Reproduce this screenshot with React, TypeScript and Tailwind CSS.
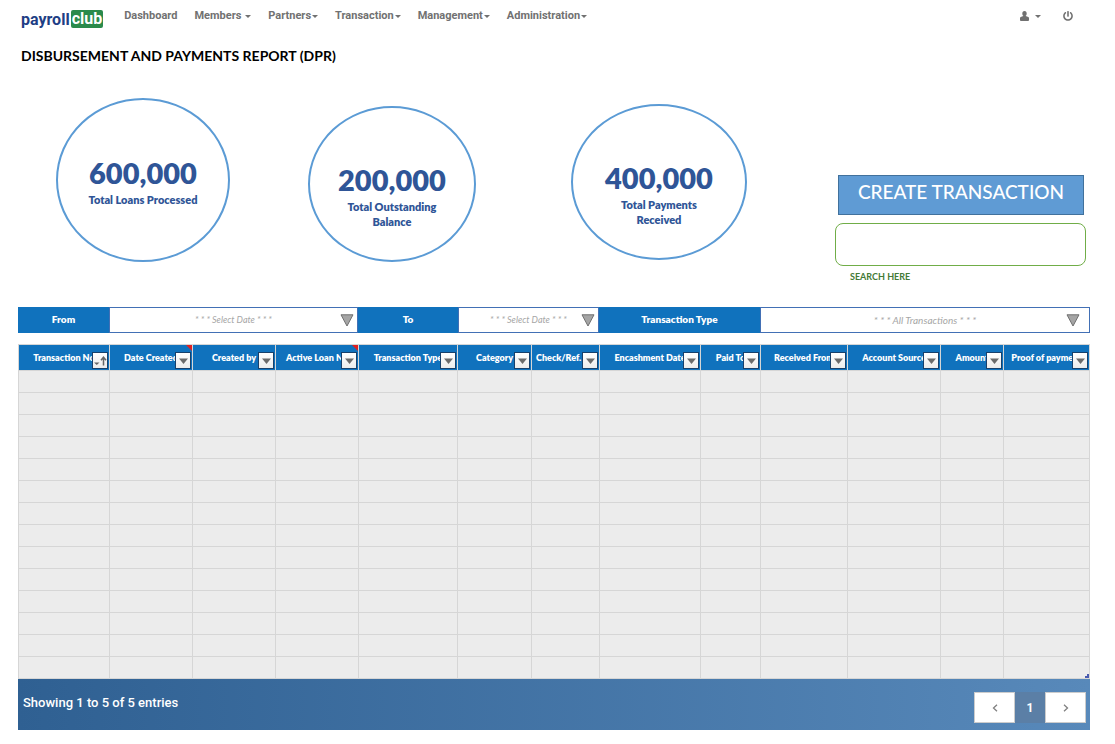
import React from "react";
import { FaPowerOff } from "react-icons/fa";
import { clsx } from "clsx";

const menus = [
  { label: "Dashboard", caret: false },
  { label: "Members", caret: true, spaced: true },
  { label: "Partners", caret: true },
  { label: "Transaction", caret: true },
  { label: "Management", caret: true },
  { label: "Administration", caret: true },
];

const stats = [
  { value: "600,000", label: "Total Loans Processed", shape: "h-[164px] w-[174px] pt-[57px]" },
  { value: "200,000", label: "Total Outstanding Balance", shape: "ml-[78px] mt-2 h-[156px] w-[168px] pt-14" },
  { value: "400,000", label: "Total Payments Received", shape: "ml-[95px] mt-1.5 h-[156px] w-[176px] pt-14" },
];

const columns = [
  { label: "Transaction No", width: "w-[91px]", sorted: true },
  { label: "Date Created", width: "w-[83px]", note: true },
  { label: "Created by", width: "w-[83px]" },
  { label: "Active Loan No", width: "w-[83px]", note: true },
  { label: "Transaction Type", width: "w-[99px]" },
  { label: "Category", width: "w-[74px]" },
  { label: "Check/Ref.", width: "w-[68px]", start: true },
  { label: "Encashment Date", width: "w-[101px]" },
  { label: "Paid To", width: "w-[60px]" },
  { label: "Received From", width: "w-[87px]" },
  { label: "Account Source", width: "w-[93px]" },
  { label: "Amount", width: "w-[63px]" },
  { label: "Proof of payment", width: "w-[86px]" },
];

const rows = Array.from({ length: 14 }, (_, i) => i);

function Caret() {
  return (
    <svg width="6" height="3" viewBox="0 0 6 3" fill="currentColor" aria-hidden="true">
      <path d="M0 0h6L3 3z" />
    </svg>
  );
}

function Logo() {
  return (
    <a href="#" className="flex items-center font-[Roboto,sans-serif] text-[16px] leading-[18px] font-bold">
      <span className="text-[#1f3f85]">payroll</span>
      <span className="mb-0.5 ml-px block rounded-[2px] bg-[#2a8a4b] px-px text-white">club</span>
    </a>
  );
}

function FilterLabel({ id, text }: { id: string; text: string }) {
  return (
    <label
      htmlFor={id}
      className="flex items-center justify-center bg-[#1072bd] pb-0.5 text-[10px] font-extrabold text-white"
    >
      {text}
    </label>
  );
}

function FilterSelect({ id, text, size, arrow }: { id: string; text: string; size: string; arrow: string }) {
  return (
    <div className="relative">
      <select
        id={id}
        className={clsx(
          "block h-[26px] w-full appearance-none border border-[#4270b5] bg-white text-center text-[#a6a6a6] italic [text-align-last:center]",
          size,
        )}
      >
        <option>{text}</option>
      </select>
      <svg
        className={clsx("pointer-events-none absolute top-[7px]", arrow)}
        width="14"
        height="13"
        viewBox="0 0 14 13"
        aria-hidden="true"
      >
        <path d="M1 .8h12L7 12z" fill="#a5a5a5" stroke="#6f6f6f" strokeWidth="1" />
      </svg>
    </div>
  );
}

function ColumnButton({ label, sorted }: { label: string; sorted?: boolean }) {
  return (
    <button
      aria-label={`Filter ${label}`}
      className="absolute right-px bottom-px flex h-[17px] w-4 items-center justify-center border border-[#17406b] bg-gradient-to-b from-white to-[#ececec]"
    >
      {sorted ? (
        <svg className="shrink-0" width="14" height="15" viewBox="0 0 14 15" aria-hidden="true">
          <path d="M1 9.500h5.500L3.750 12z" fill="#666" />
          <path d="M10.500 12.500V4.500M8 7.200l2.500-3 2.500 3" fill="none" stroke="#666" strokeWidth="1.500" />
        </svg>
      ) : (
        <svg className="mt-px" width="9" height="6" viewBox="0 0 9 6" aria-hidden="true">
          <path d="M0 .5h9L4.500 6z" fill="#6b6b6b" />
        </svg>
      )}
    </button>
  );
}

export default function App() {
  return (
    <div className="bg-white pr-[25px] pl-[18px] font-[Lato,sans-serif] text-black">
      <header className="flex h-10 items-center pl-[3px]">
        <Logo />
        <nav className="mb-2 ml-[21px] flex gap-[17px] font-[Roboto,sans-serif] text-[11px] leading-4 font-bold text-[#717171]">
          {menus.map((m) => (
            <a key={m.label} href="#" className={clsx("flex items-center", m.spaced ? "gap-1" : "gap-px")}>
              {m.label}
              {m.caret && <Caret />}
            </a>
          ))}
        </nav>
        <div className="mr-[17px] mb-2 ml-auto flex items-center gap-[22px] text-[#717171]">
          <button aria-label="Account" className="flex items-center gap-1.5">
            <svg width="9" height="10" viewBox="0 0 9 10" fill="currentColor" aria-hidden="true">
              <path d="M4.500 0C6 0 6.700 1 6.700 2.400c0 1-.4 1.900-1 2.400v.3l2.600.900c.5.200.7.600.7 1.100V9c0 .6-.3.900-.9.900H.9C.3 9.900 0 9.600 0 9V7.100c0-.5.200-.9.700-1.100l2.600-.9v-.3c-.6-.5-1-1.400-1-2.400C2.300 1 3 0 4.500 0z" />
            </svg>
            <Caret />
          </button>
          <button aria-label="Log out">
            <FaPowerOff size={10} />
          </button>
        </div>
      </header>

      <main>
        <h1 className="mt-1.5 pl-[3px] text-[14px] leading-5 font-bold">
          DISBURSEMENT AND PAYMENTS REPORT (DPR)
        </h1>

        <section className="mt-8 flex items-start pl-[38px]">
          {stats.map((s) => (
            <div
              key={s.value}
              className={clsx(
                "flex shrink-0 flex-col items-center rounded-[50%] border-2 border-[#5b9bd5] text-center font-extrabold text-[#2f5597]",
                s.shape,
              )}
            >
              <div className="text-[29px] leading-8">{s.value}</div>
              <div className="mt-[3px] w-[120px] text-[11px] leading-[15px]">{s.label}</div>
            </div>
          ))}
          <div className="mr-1 ml-auto flex w-[251px] flex-col pt-[77px]">
            <button className="mr-[2px] ml-[3px] h-10 border border-[#41719c] bg-[#5f9bd4] pb-1.5 text-[19px] leading-6 font-medium text-white">
              CREATE TRANSACTION
            </button>
            <input
              id="search"
              type="text"
              className="mt-2 h-[43px] rounded-[8px] border border-[#70ad47] bg-white px-3 text-sm"
            />
            <label htmlFor="search" className="mt-[5px] pl-[15px] text-[9px] leading-3 font-bold text-[#447a36]">
              SEARCH HERE
            </label>
          </div>
        </section>

        <form className="mt-6 grid grid-cols-[91fr_249fr_100fr_141fr_161fr_330fr]">
          <FilterLabel id="from" text="From" />
          <FilterSelect id="from" text="* * * Select Date * * *" size="text-[9px]" arrow="right-1" />
          <FilterLabel id="to" text="To" />
          <FilterSelect id="to" text="* * * Select Date * * *" size="text-[9px]" arrow="right-1" />
          <FilterLabel id="type" text="Transaction Type" />
          <FilterSelect id="type" text="* * * All Transactions * * *" size="text-[10px]" arrow="right-2.5" />
        </form>

        <div className="relative mt-[11px]">
          <table className="w-full table-fixed border-collapse border border-[#d6d6d6] bg-[#ececec]">
            <colgroup>
              {columns.map((c) => (
                <col key={c.label} className={c.width} />
              ))}
            </colgroup>
            <thead>
              <tr className="h-[26px]">
                {columns.map((c) => (
                  <th
                    key={c.label}
                    className={clsx(
                      "relative border border-[#d6d6d6] bg-[#1072bd] p-0 text-[9px] leading-3 font-extrabold whitespace-nowrap text-white",
                      c.start && "pl-1 text-left",
                    )}
                  >
                    {c.label}
                    {c.note && (
                      <svg className="absolute top-0 right-0" width="6" height="6" viewBox="0 0 6 6" aria-hidden="true">
                        <path d="M0 0h6v6z" fill="#e02020" />
                      </svg>
                    )}
                    <ColumnButton label={c.label} sorted={c.sorted} />
                  </th>
                ))}
              </tr>
            </thead>
            <tbody>
              {rows.map((r) => (
                <tr key={r} className="h-[22px]">
                  {columns.map((c) => (
                    <td key={c.label} className="border border-[#d6d6d6] p-0" />
                  ))}
                </tr>
              ))}
            </tbody>
          </table>
          <svg
            className="absolute right-px bottom-px"
            width="4"
            height="4"
            viewBox="0 0 4 4"
            aria-hidden="true"
          >
            <path d="M2 0h2v4H0V2h2z" fill="#4a5bb0" />
          </svg>
        </div>

        <footer className="flex h-[51px] items-center justify-between bg-gradient-to-r from-[#2f6092] to-[#5889ba] pr-1 pl-[5px] font-[Roboto,sans-serif]">
          <p className="mb-1 text-[13px] font-medium text-white">Showing 1 to 5 of 5 entries</p>
          <div className="mt-1.5 flex h-[31px] text-[#808080]">
            <button aria-label="Previous page" className="flex w-[41px] items-center justify-center border border-[#ccc] bg-white">
              <svg width="6" height="8" viewBox="0 0 6 8" fill="none" stroke="currentColor" strokeWidth="1.300" aria-hidden="true">
                <path d="M5 .8L1.500 4 5 7.200" />
              </svg>
            </button>
            <button className="w-[30px] bg-[#5b7fa6] text-[12px] font-bold text-white">1</button>
            <button aria-label="Next page" className="flex w-[41px] items-center justify-center border border-[#ccc] bg-white">
              <svg width="6" height="8" viewBox="0 0 6 8" fill="none" stroke="currentColor" strokeWidth="1.300" aria-hidden="true">
                <path d="M1 .8L4.500 4 1 7.200" />
              </svg>
            </button>
          </div>
        </footer>
      </main>
    </div>
  );
}
